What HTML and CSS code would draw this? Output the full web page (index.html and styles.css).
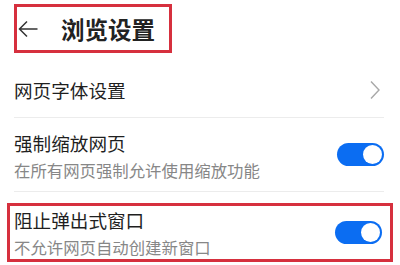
FILE: index.html
```html
<!DOCTYPE html>
<html lang="zh-CN">
<head>
    <meta charset="UTF-8">
    <meta name="viewport" content="width=device-width, initial-scale=1.0">
    <title>浏览设置</title>
    <link rel="stylesheet" href="styles.css">
</head>
<body>
    <div class="header">
        <div class="title-box">
            <svg class="back-icon" width="20" height="20" viewBox="0 0 20 20">
                <path d="M19.5 10 H1.5 M9 2.5 L1.5 10 L9 17.5" fill="none" stroke="#333" stroke-width="1.5"/>
            </svg>
            <div class="page-title">浏览设置</div>
        </div>
    </div>

    <div class="list">
        <div class="row row-link">
            <div class="row-title">网页字体设置</div>
            <svg class="chevron" width="10" height="20" viewBox="0 0 10 20">
                <path d="M1 1.5 L9 10 L1 18.5" fill="none" stroke="#a8a8a8" stroke-width="1.4"/>
            </svg>
        </div>

        <div class="row row-switch">
            <div class="row-text">
                <div class="row-title">强制缩放网页</div>
                <div class="row-sub">在所有网页强制允许使用缩放功能</div>
            </div>
            <div class="switch"><div class="knob"></div></div>
        </div>
    </div>

    <div class="row row-switch highlight">
        <div class="row-text">
            <div class="row-title">阻止弹出式窗口</div>
            <div class="row-sub">不允许网页自动创建新窗口</div>
        </div>
        <div class="switch"><div class="knob"></div></div>
    </div>
</body>
</html>
```

FILE: styles.css
```css
/* Core Styling */
* {
    margin: 0;
    padding: 0;
    box-sizing: border-box;
}

body {
    font-family: "Noto Sans CJK SC", "Noto Sans", sans-serif;
    background-color: #fff;
    color: #1f1f1f;
    width: 400px;
    height: 265px;
    overflow: hidden;
}

.header {
    padding: 4px 0 0 14px;
}

.title-box {
    display: inline-flex;
    align-items: center;
    height: 49px;
    padding: 0 14px 0 1px;
    border: 3px solid #d6303e;
}

.back-icon {
    margin-right: 23px;
}

.page-title {
    font-size: 23.5px;
    font-weight: 600;
    line-height: 28px;
    color: #222;
}

.list {
    padding: 0 16px 0 14px;
}

.row {
    display: flex;
    align-items: center;
    justify-content: space-between;
}

.row-link {
    padding: 24px 0 14px;
    border-bottom: 1px solid #ececec;
}

.row-switch {
    padding: 13px 0 10px;
    border-bottom: 1px solid #ececec;
}

.row-title {
    font-size: 18.6px;
    line-height: 26px;
}

.row-switch .row-title {
    line-height: 24px;
}

.row-sub {
    margin-top: 4px;
    font-size: 16.4px;
    line-height: 22px;
    color: #878787;
}

.chevron {
    margin-right: 4px;
}

.switch {
    width: 47px;
    height: 23px;
    border-radius: 12px;
    background-color: #0b6df2;
    display: flex;
    justify-content: flex-end;
    align-items: center;
    padding-right: 2px;
    margin-bottom: 4px;
}

.knob {
    width: 19px;
    height: 19px;
    border-radius: 50%;
    background-color: #fff;
}

/* highlighted row */
.highlight {
    margin: 11px 7px 0 7px;
    padding: 2px 8px 1px 4px;
    border: 3px solid #d6303e;
}

.highlight .switch {
    margin-bottom: 2px;
}
```
